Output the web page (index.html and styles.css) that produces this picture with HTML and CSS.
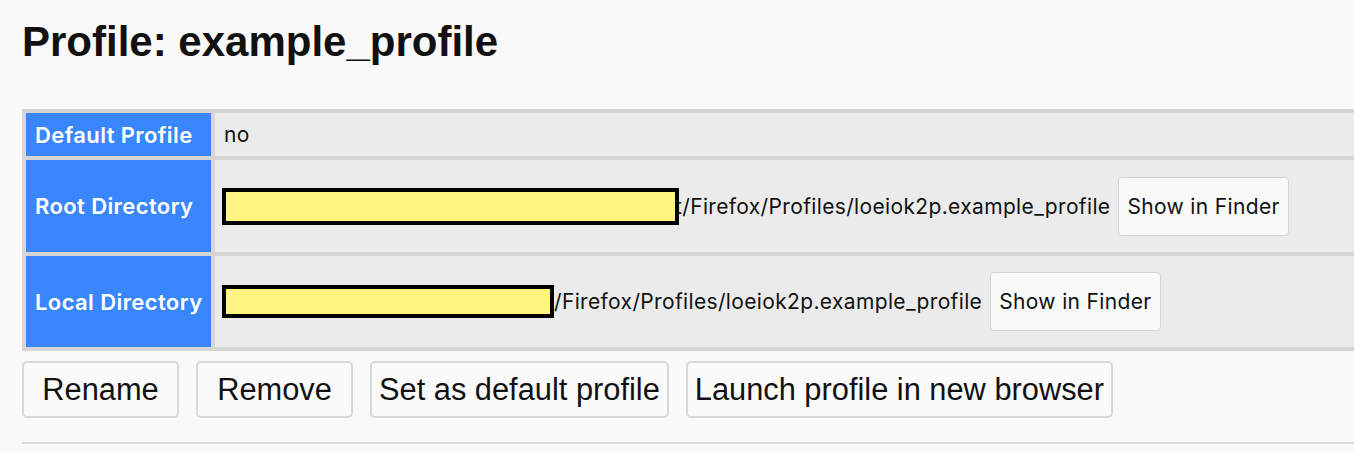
FILE: index.html
```html
<!DOCTYPE html>
<html>
<head>
<meta charset="utf-8">
<link rel="stylesheet" href="styles.css">
</head>
<body>
<h1 class="title">Profile: example_profile</h1>
<table class="info">
  <colgroup>
    <col class="col-label">
    <col>
  </colgroup>
  <tr class="row-short">
    <th class="label">Default Profile</th>
    <td class="value">no</td>
  </tr>
  <tr class="row-tall">
    <th class="label">Root Directory</th>
    <td class="value">
      <div class="dir">
        <span class="redact redact-root"></span><span class="path">t/Firefox/Profiles/loeiok2p.example_profile</span>
        <button class="finder">Show in Finder</button>
      </div>
    </td>
  </tr>
  <tr class="row-tall2">
    <th class="label">Local Directory</th>
    <td class="value">
      <div class="dir">
        <span class="redact redact-local"></span><span class="path">/Firefox/Profiles/loeiok2p.example_profile</span>
        <button class="finder">Show in Finder</button>
      </div>
    </td>
  </tr>
</table>
<div class="actions">
  <button class="action">Rename</button>
  <button class="action">Remove</button>
  <button class="action">Set as default profile</button>
  <button class="action">Launch profile in new browser</button>
</div>
<div class="rule"></div>
</body>
</html>
```
FILE: styles.css
```css
html, body {
  margin: 0;
  padding: 0;
  overflow: hidden;
}
body {
  background: #f9f9f9;
  color: #111;
  font-family: "Liberation Sans", Arial, sans-serif;
  padding-left: 22px;
  width: 1332px;
}
.title {
  font-size: 42px;
  line-height: 50px;
  font-weight: bold;
  margin: 17px 0 42px 0;
}
.info {
  border-spacing: 4px;
  background: #d6d6d6;
  width: 1400px;
  table-layout: fixed;
}
.col-label {
  width: 185px;
}
.label {
  background: #3a87fd;
  color: #fff;
  font-family: Inter, "Liberation Sans", sans-serif;
  font-weight: 600;
  font-size: 22px;
  letter-spacing: 0.4px;
  text-align: left;
  padding: 0 0 0 9px;
  white-space: nowrap;
  overflow: hidden;
}
.value {
  background: #ebebeb;
  font-family: Inter, "Liberation Sans", sans-serif;
  font-size: 21px;
  letter-spacing: 0.35px;
  padding: 0 9px;
  white-space: nowrap;
}
.row-short > * { height: 43px; }
.row-tall > * { height: 92px; }
.row-tall2 > * { height: 91px; }
.dir {
  display: flex;
  align-items: center;
}
.redact {
  display: inline-block;
  box-sizing: border-box;
  background: #fff580;
  border: 4px solid #000;
  position: relative;
  z-index: 1;
  margin-left: -2px;
}
.redact-root {
  width: 457px;
  height: 37px;
  margin-right: -4px;
}
.redact-local {
  width: 332px;
  height: 33px;
}
.path {
  margin-right: 8px;
}
.finder {
  font-family: Inter, "Liberation Sans", sans-serif;
  font-size: 21px;
  letter-spacing: 0.35px;
  color: #111;
  background: #f9f9f9;
  border: 1.5px solid #d4d4d4;
  border-radius: 4px;
  height: 59px;
  padding: 0 8px;
}
.actions {
  display: flex;
  gap: 17px;
  margin-top: 10px;
}
.action {
  font-family: "Liberation Sans", Arial, sans-serif;
  font-size: 30.8px;
  color: #111;
  background: #fafafa;
  border: 2px solid #d8d8d8;
  border-radius: 5px;
  height: 57px;
  min-width: 157px;
  padding: 0 7px;
}
.rule {
  margin-top: 24px;
  height: 2px;
  background: #dcdcdc;
}
```
